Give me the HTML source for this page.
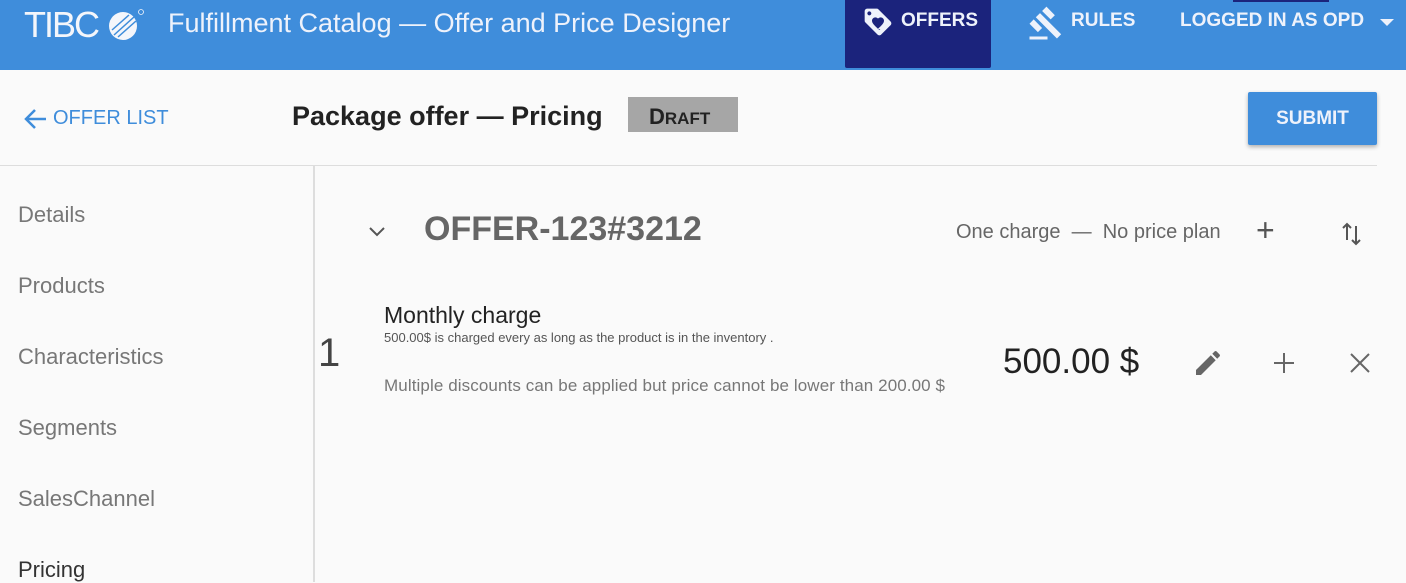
<!DOCTYPE html>
<html><head><meta charset="utf-8"><style>
*{margin:0;padding:0;box-sizing:border-box}
body{width:1406px;height:582px;overflow:hidden;background:#fafafa;font-family:"Liberation Sans",sans-serif;position:relative}
.hdr{position:absolute;left:0;top:0;width:1406px;height:70px;background:#3f8ddb;color:#eef2fb}
.abs{position:absolute}
.side div{position:absolute;left:18px;font-size:22px;color:#777}
</style></head><body>
<div class="hdr">
 <div class="abs" style="left:24px;top:4px;font-size:36px;letter-spacing:-2px;color:#f4f6fb">TIBC</div>
 <svg class="abs" style="left:106px;top:8px" width="38" height="34" viewBox="0 0 38 34"><circle cx="17" cy="18" r="14" fill="#f4f6fb"/><path d="M8 27 L28 9 M12 29 L30 13 M6 22 L23 7" stroke="#3f8ddb" stroke-width="1.5"/><circle cx="35" cy="4" r="2.5" fill="none" stroke="#f4f6fb" stroke-width="0.8"/></svg>
 <div class="abs" style="left:168px;top:8px;font-size:27px;color:#eef2fb">Fulfillment Catalog — Offer and Price Designer</div>
 <div class="abs" style="left:845px;top:0;width:146px;height:68px;background:#1b237c;border-radius:0 0 2px 2px"></div>
 <svg class="abs" style="left:861px;top:6px" width="34" height="32" viewBox="0 0 24 24"><path fill="#eef2fb" d="M21.4 11.6l-9-9C12.1 2.2 11.6 2 11 2H4c-1.1 0-2 .9-2 2v7c0 .6.2 1.1.6 1.4l9 9c.4.4.9.6 1.4.6s1.1-.2 1.4-.6l7-7c.4-.4.6-.9.6-1.4s-.2-1-.6-1.4zM5.5 7C4.7 7 4 6.3 4 5.5S4.7 4 5.5 4 7 4.7 7 5.5 6.3 7 5.5 7zm8.3 10.3L13 18l-.8-.7C9.4 14.7 7.5 13 7.5 11c0-1.4 1.1-2.5 2.5-2.5.8 0 1.6.4 2 1 .5-.6 1.2-1 2-1 1.4 0 2.5 1.1 2.5 2.5 0 2-1.9 3.7-4.7 6.3z"/></svg>
 <div class="abs" style="left:901px;top:10px;font-size:19px;font-weight:bold;color:#eef2fb">OFFERS</div>
 <svg class="abs" style="left:1028px;top:5px" width="36" height="36" viewBox="0 0 24 24"><path fill="#eef2fb" d="M1 21h12v2H1zM5.2 8.2l2.8-2.8 14.1 14.1-2.8 2.8zM12.3 1.1l5.6 5.7-2.8 2.8-5.7-5.6zM3.8 9.6l5.6 5.7-2.8 2.8L1 12.5z"/></svg>
 <div class="abs" style="left:1071px;top:10px;font-size:19px;font-weight:bold;color:#eef2fb">RULES</div>
 <div class="abs" style="left:1180px;top:10px;font-size:19px;font-weight:bold;color:#eef2fb">LOGGED IN AS OPD</div>
 <div class="abs" style="left:1380px;top:19px;width:0;height:0;border-left:7px solid transparent;border-right:7px solid transparent;border-top:7px solid #eef2fb"></div>
 <div class="abs" style="left:1233px;top:0;width:96px;height:2px;background:#1b237c"></div>
</div>
<svg class="abs" style="left:22px;top:107px" width="26" height="24" viewBox="0 0 26 24"><path d="M24 12H4M13 3L4 12l9 9" stroke="#3f8ddb" stroke-width="2.5" fill="none"/></svg>
<div class="abs" style="left:53px;top:107px;font-size:20px;color:#3f8ddb">OFFER LIST</div>
<div class="abs" style="left:292px;top:101px;font-size:27px;font-weight:bold;color:#222">Package offer — Pricing</div>
<div class="abs" style="left:628px;top:97px;width:110px;height:35px;background:#a6a6a6;color:#222;font-weight:bold;font-size:22px;padding:9px 0 0 21px;line-height:1">D<span style="font-size:17px">RAFT</span></div>
<div class="abs" style="left:1248px;top:92px;width:129px;height:53px;background:#3f8ddb;color:#eef2fb;font-size:19px;font-weight:bold;text-align:center;line-height:53px;border-radius:2px;box-shadow:0 2px 4px rgba(0,0,0,.3)">SUBMIT</div>
<div class="abs" style="left:0;top:165px;width:1377px;height:1px;background:#ddd"></div>
<div class="abs" style="left:313px;top:166px;width:2px;height:416px;background:#ddd"></div>
<div class="side">
<div style="top:202px">Details</div><div style="top:273px">Products</div><div style="top:344px">Characteristics</div><div style="top:415px">Segments</div><div style="top:486px">SalesChannel</div><div style="top:557px;color:#333">Pricing</div>
</div>
<svg class="abs" style="left:367px;top:224px" width="20" height="16" viewBox="0 0 20 16"><path d="M3 4l7 7 7-7" stroke="#555" stroke-width="2" fill="none"/></svg>
<div class="abs" style="left:424px;top:210px;font-size:34px;font-weight:bold;color:#666">OFFER-123#3212</div>
<div class="abs" style="left:956px;top:221px;font-size:20px;color:#666">One charge &nbsp;—&nbsp; No price plan</div>
<div class="abs" style="left:1256px;top:212px;font-size:32px;color:#555;font-weight:300">+</div>
<svg class="abs" style="left:1340px;top:220px" width="24" height="28" viewBox="0 0 24 28"><path d="M7 20V4M3 8l4-4 4 4M16 6v18M12 20l4 4 4-4" stroke="#555" stroke-width="2" fill="none"/></svg>
<div class="abs" style="left:318px;top:331px;font-size:40px;color:#444;font-weight:300">1</div>
<div class="abs" style="left:384px;top:302px;font-size:23px;color:#222">Monthly charge</div>
<div class="abs" style="left:384px;top:330px;font-size:13px;color:#555">500.00$ is charged every as long as the product is in the inventory .</div>
<div class="abs" style="left:384px;top:376px;width:565px;white-space:nowrap;overflow:hidden;font-size:17px;color:#777;letter-spacing:0.1px">Multiple discounts can be applied but price cannot be lower than 200.00 $</div>
<div class="abs" style="left:1003px;top:342px;font-size:35px;color:#222">500.00 $</div>
<svg class="abs" style="left:1192px;top:347px" width="32" height="32" viewBox="0 0 24 24"><path fill="#666" d="M3 17.25V21h3.75L17.8 9.9l-3.7-3.7L3 17.25zM20.7 7a1 1 0 000-1.4l-2.3-2.3a1 1 0 00-1.4 0l-1.8 1.8 3.7 3.7L20.7 7z"/></svg>
<svg class="abs" style="left:1272px;top:351px" width="24" height="24" viewBox="0 0 24 24"><path d="M12 2v20M2 12h20" stroke="#666" stroke-width="2"/></svg>
<svg class="abs" style="left:1349px;top:352px" width="22" height="22" viewBox="0 0 22 22"><path d="M2 2l18 18M20 2L2 20" stroke="#666" stroke-width="2"/></svg>
</body></html>
